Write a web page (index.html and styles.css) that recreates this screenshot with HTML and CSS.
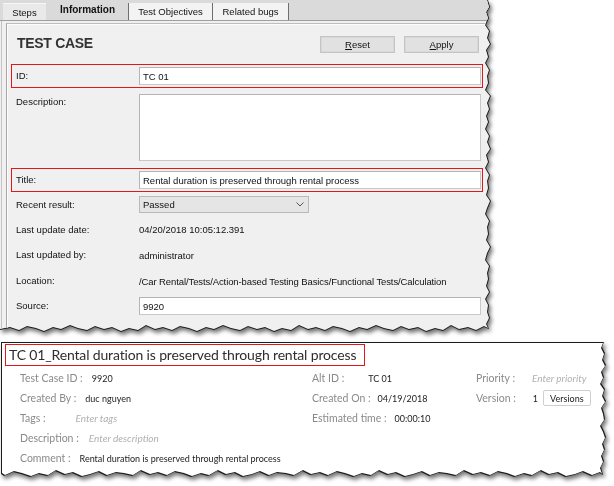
FILE: index.html
```html
<!DOCTYPE html>
<html>
<head>
<meta charset="utf-8">
<title>Test case</title>
<link rel="stylesheet" href="styles.css">
</head>
<body>
<div class="shot shot-top">
  <div class="edge">
    <div class="sheet sheet-top">
      <div class="tabs">
        <div class="tab tab-steps">Steps</div>
        <div class="tab tab-info">Information</div>
        <div class="tab tab-obj">Test Objectives</div>
        <div class="tab tab-bugs">Related bugs</div>
      </div>
      <div class="frame">
        <div class="panel">
          <div class="head">
            <h1>TEST CASE</h1>
            <div class="btns">
              <span class="btn"><u>R</u>eset</span>
              <span class="btn"><u>A</u>pply</span>
            </div>
          </div>
          <div class="row hl r-24"><span class="lbl">ID:</span><span class="field">TC 01</span></div>
          <div class="row r-desc"><span class="lbl">Description:</span><span class="field area"></span></div>
          <div class="row hl r-24 r-title"><span class="lbl">Title:</span><span class="field">Rental duration is preserved through rental process</span></div>
          <div class="row r-25"><span class="lbl">Recent result:</span><span class="select">Passed<svg class="chev" width="8" height="5" viewBox="0 0 8 5"><path d="M0.5 0.5 L4 4 L7.5 0.5" fill="none" stroke="#555" stroke-width="1"/></svg></span></div>
          <div class="row r-25"><span class="lbl">Last update date:</span><span class="val">04/20/2018 10:05:12.391</span></div>
          <div class="row r-26"><span class="lbl">Last updated by:</span><span class="val">administrator</span></div>
          <div class="row r-26"><span class="lbl">Location:</span><span class="val val-loc">/Car Rental/Tests/Action-based Testing Basics/Functional Tests/Calculation</span></div>
          <div class="row r-24"><span class="lbl">Source:</span><span class="field">9920</span></div>
        </div>
      </div>
    </div>
  </div>
</div>

<div class="shot shot-bottom">
  <div class="edge">
    <div class="sheet sheet-bottom">
      <div class="title-box">TC 01_Rental duration is preserved through rental process</div>
      <div class="meta">
        <div class="col">
          <div class="item"><span class="k">Test Case ID :</span><span class="v v-id">9920</span></div>
          <div class="item"><span class="k">Created By :</span><span class="v v-by">duc nguyen</span></div>
          <div class="item"><span class="k">Tags :</span><span class="ph ph-tags">Enter tags</span></div>
          <div class="item"><span class="k">Description :</span><span class="ph ph-desc">Enter description</span></div>
          <div class="item"><span class="k">Comment :</span><span class="v v-com">Rental duration is preserved through rental process</span></div>
        </div>
        <div class="col">
          <div class="item"><span class="k">Alt ID :</span><span class="v v-alt">TC 01</span></div>
          <div class="item"><span class="k">Created On :</span><span class="v v-on">04/19/2018</span></div>
          <div class="item"><span class="k">Estimated time :</span><span class="v v-est">00:00:10</span></div>
        </div>
        <div class="col col-right">
          <div class="item"><span class="k">Priority :</span><span class="ph ph-pri">Enter priority</span></div>
          <div class="item"><span class="k">Version :</span><span class="v v-ver">1</span><span class="vbtn">Versions</span></div>
        </div>
      </div>
    </div>
  </div>
</div>
</body>
</html>
```

FILE: styles.css
```css
* { box-sizing: border-box; margin: 0; padding: 0; }
html, body { background: #fff; }
body {
  width: 614px;
  height: 486px;
  overflow: hidden;
  font-family: "Liberation Sans", Arial, sans-serif;
  color: #111;
}

/* torn screenshot pieces */
.shot { filter: drop-shadow(2px 3px 2px rgba(0,0,0,0.55)); }
.edge { width: 100%; height: 100%; background: #1c1c1c; clip-path: var(--torn); }
.sheet { width: 100%; height: 100%; clip-path: var(--torn); overflow: hidden; }

.shot-top {
  width: 492px;
  height: 333px;
  --torn: polygon(0 0, calc(100% - 4px) 0, calc(100% - 2px) 7px, calc(100% - 5px) 12px, calc(100% - 3px) 18px, calc(100% - 6px) 25px, calc(100% - 2px) 31px, calc(100% - 4px) 38px, calc(100% - 1px) 44px, calc(100% - 5px) 50px, calc(100% - 3px) 57px, calc(100% - 6px) 63px, calc(100% - 2px) 70px, calc(100% - 4px) 76px, calc(100% - 3px) 83px, calc(100% - 6px) 90px, calc(100% - 1px) 96px, calc(100% - 4px) 103px, calc(100% - 2px) 109px, calc(100% - 5px) 116px, calc(100% - 3px) 122px, calc(100% - 6px) 129px, calc(100% - 2px) 136px, calc(100% - 4px) 142px, calc(100% - 1px) 149px, calc(100% - 5px) 155px, calc(100% - 3px) 162px, calc(100% - 6px) 168px, calc(100% - 2px) 175px, calc(100% - 4px) 181px, calc(100% - 3px) 188px, calc(100% - 5px) 195px, calc(100% - 1px) 201px, calc(100% - 4px) 208px, calc(100% - 6px) 214px, calc(100% - 2px) 221px, calc(100% - 4px) 227px, calc(100% - 3px) 234px, calc(100% - 5px) 240px, calc(100% - 1px) 247px, calc(100% - 4px) 253px, calc(100% - 6px) 260px, calc(100% - 2px) 266px, calc(100% - 4px) 273px, calc(100% - 3px) 279px, calc(100% - 5px) 286px, calc(100% - 2px) 292px, calc(100% - 6px) 299px, calc(100% - 3px) 305px, calc(100% - 4px) 312px, calc(100% - 2px) 318px, calc(100% - 5px) 324px, calc(100% - 3px) calc(100% - 4px),
    484px calc(100% - 6px), 476px calc(100% - 2px), 468px calc(100% - 5px), 459px calc(100% - 3px), 451px calc(100% - 7px), 443px calc(100% - 2px), 435px calc(100% - 4px), 426px calc(100% - 1px), 418px calc(100% - 5px), 409px calc(100% - 3px), 401px calc(100% - 6px), 393px calc(100% - 2px), 384px calc(100% - 4px), 376px calc(100% - 7px), 367px calc(100% - 3px), 359px calc(100% - 5px), 350px calc(100% - 1px), 342px calc(100% - 4px), 333px calc(100% - 6px), 325px calc(100% - 2px), 316px calc(100% - 5px), 308px calc(100% - 3px), 299px calc(100% - 7px), 291px calc(100% - 2px), 282px calc(100% - 4px), 274px calc(100% - 1px), 265px calc(100% - 5px), 257px calc(100% - 3px), 248px calc(100% - 6px), 240px calc(100% - 2px), 231px calc(100% - 4px), 223px calc(100% - 7px), 214px calc(100% - 3px), 206px calc(100% - 5px), 197px calc(100% - 1px), 189px calc(100% - 4px), 180px calc(100% - 6px), 172px calc(100% - 2px), 163px calc(100% - 5px), 155px calc(100% - 3px), 146px calc(100% - 7px), 138px calc(100% - 2px), 129px calc(100% - 4px), 121px calc(100% - 1px), 112px calc(100% - 5px), 104px calc(100% - 3px), 95px calc(100% - 6px), 87px calc(100% - 2px), 78px calc(100% - 4px), 70px calc(100% - 7px), 61px calc(100% - 3px), 53px calc(100% - 5px), 44px calc(100% - 1px), 36px calc(100% - 4px), 27px calc(100% - 6px), 19px calc(100% - 2px), 10px calc(100% - 5px), 0 calc(100% - 3px));
}
.shot-top .edge { padding: 0 1px 1px 0; }

.shot-bottom {
  width: 606px;
  height: 136px;
  margin: 9px 0 0 1px;
  --torn: polygon(0 0, calc(100% - 3px) 0, calc(100% - 5px) 5px, calc(100% - 2px) 11px, calc(100% - 4px) 17px, calc(100% - 1px) 23px, calc(100% - 5px) 29px, calc(100% - 3px) 35px, calc(100% - 6px) 41px, calc(100% - 2px) 47px, calc(100% - 4px) 53px, calc(100% - 1px) 59px, calc(100% - 5px) 65px, calc(100% - 3px) 71px, calc(100% - 2px) 77px, calc(100% - 6px) 83px, calc(100% - 3px) 89px, calc(100% - 1px) 95px, calc(100% - 4px) 101px, calc(100% - 2px) 107px, calc(100% - 5px) 113px, calc(100% - 3px) 119px, calc(100% - 6px) 125px, calc(100% - 4px) calc(100% - 3px),
    598px calc(100% - 5px), 590px calc(100% - 2px), 581px calc(100% - 6px), 573px calc(100% - 3px), 564px calc(100% - 1px), 556px calc(100% - 5px), 547px calc(100% - 3px), 539px calc(100% - 7px), 530px calc(100% - 2px), 522px calc(100% - 4px), 513px calc(100% - 1px), 505px calc(100% - 4px), 496px calc(100% - 6px), 488px calc(100% - 2px), 479px calc(100% - 5px), 471px calc(100% - 3px), 462px calc(100% - 7px), 454px calc(100% - 2px), 445px calc(100% - 4px),
    437px calc(100% - 5px), 428px calc(100% - 2px), 420px calc(100% - 6px), 411px calc(100% - 3px), 403px calc(100% - 1px), 394px calc(100% - 5px), 386px calc(100% - 3px), 377px calc(100% - 7px), 369px calc(100% - 2px), 360px calc(100% - 4px), 352px calc(100% - 1px), 343px calc(100% - 4px), 335px calc(100% - 6px), 326px calc(100% - 2px), 318px calc(100% - 5px), 309px calc(100% - 3px), 301px calc(100% - 7px), 292px calc(100% - 2px), 284px calc(100% - 4px),
    275px calc(100% - 5px), 267px calc(100% - 2px), 258px calc(100% - 6px), 250px calc(100% - 3px), 241px calc(100% - 1px), 233px calc(100% - 5px), 224px calc(100% - 3px), 216px calc(100% - 7px), 207px calc(100% - 2px), 199px calc(100% - 4px), 190px calc(100% - 1px), 182px calc(100% - 4px), 173px calc(100% - 6px), 165px calc(100% - 2px), 156px calc(100% - 5px), 148px calc(100% - 3px), 139px calc(100% - 7px), 131px calc(100% - 2px), 122px calc(100% - 4px),
    114px calc(100% - 5px), 105px calc(100% - 2px), 97px calc(100% - 6px), 88px calc(100% - 3px), 80px calc(100% - 1px), 71px calc(100% - 5px), 63px calc(100% - 3px), 54px calc(100% - 7px), 46px calc(100% - 2px), 37px calc(100% - 4px), 29px calc(100% - 1px), 20px calc(100% - 4px), 12px calc(100% - 6px), 3px calc(100% - 2px), 0 calc(100% - 4px));
}
.shot-bottom .edge { padding: 1px; }

/* ---------- top: desktop form ---------- */
.sheet-top { background: #f0f0f0; font-size: 9.5px; }

.tabs {
  display: flex;
  align-items: flex-end;
  height: 21px;
  padding-left: 3px;
  background: #dadada;
  border-bottom: 1px solid #9f9f9f;
}
.tab {
  height: 17px;
  display: flex;
  align-items: center;
  justify-content: center;
  background: #f3f3f3;
  border-left: 1px solid #6f6f6f;
  border-right: 1px solid #6f6f6f;
}
.tab-steps { width: 43px; background: #e9e9e9; border: none; border-top: 1px solid #f6f6f6; margin-right: 1px; }
.tab-info { width: 81px; height: 20px; background: #dadada; border: none; font-weight: bold; font-size: 10px; padding-bottom: 2px; }
.tab-obj { width: 85px; }
.tab-bugs { width: 76px; border-left: none; }

.frame {
  height: calc(100% - 21px);
  margin-left: 1px;
  padding: 2px 0 0 4px;
  border-left: 1px solid #c4c4c4;
}
.panel {
  height: 100%;
  border-top: 1px solid #bdbdbd;
  border-left: 1px solid #a6a6a6;
  box-shadow: inset 1px 1px 0 #fdfdfd;
}

.head {
  width: 472px;
  height: 40px;
  margin-left: 4px;
  padding: 0 4px 0 6px;
  display: flex;
  align-items: center;
  justify-content: space-between;
}
.head h1 {
  font-size: 14px;
  font-weight: bold;
  letter-spacing: -0.3px;
  color: #333;
  margin-bottom: 3px;
}
.btns { display: flex; gap: 9px; }
.btn {
  width: 75px;
  height: 17px;
  display: flex;
  align-items: center;
  justify-content: center;
  background: #e1e1e1;
  border: 1px solid #c4c4c4;
  box-shadow: inset 0 0 0 1px #d8d8d8;
}

.row {
  width: 472px;
  margin-left: 4px;
  display: flex;
  align-items: center;
  border: 1px solid transparent;
  padding: 0 1px 0 4px;
}
.row.hl { border-color: #e3161b; }
.r-24 { height: 24px; }
.r-25 { height: 25px; }
.r-26 { height: 26px; }
.r-desc { height: 74px; margin-top: 3px; align-items: flex-start; padding-top: 2px; }
.r-title { margin-top: 3px; }
.lbl { width: 123px; flex: none; line-height: 16px; }
.field {
  width: 342px;
  height: 18px;
  display: flex;
  align-items: center;
  padding-left: 3px;
  background: #fff;
  border: 1px solid #c8c8c8;
  border-top-color: #b4b4b4;
  border-left-color: #b4b4b4;
}
.field.area { height: 67px; }
.select {
  width: 170px;
  height: 17px;
  display: flex;
  align-items: center;
  justify-content: space-between;
  padding: 0 4px 0 3px;
  background: #e5e5e5;
  border: 1px solid #b9b9b9;
}
.chev { display: block; }
.val { white-space: nowrap; }
.val-loc { letter-spacing: -0.1px; }

/* ---------- bottom: web view ---------- */
.sheet-bottom { background: #fff; font-family: Lato, "Liberation Sans", sans-serif; }
.title-box {
  display: inline-block;
  height: 22px;
  margin: 1px 0 0 3px;
  padding: 0 8px 0 3px;
  border: 1px solid #e3161b;
  font-size: 14px;
  letter-spacing: -0.15px;
  line-height: 20px;
  color: #2e2e2e;
  white-space: nowrap;
}
.meta {
  display: grid;
  grid-template-columns: 292px 164px 1fr;
  padding-left: 18px;
  margin-top: 2px;
}
.col { display: flex; flex-direction: column; }
.item { height: 20px; display: flex; align-items: center; white-space: nowrap; }
.k { font-size: 10.5px; color: #8a8a8a; }
.v { font-size: 9px; color: #222; margin-left: 9px; }
.ph { font-size: 10px; font-style: italic; color: #b0b0b0; }
.ph-tags { margin-left: 30px; }
.ph-desc { margin-left: 10px; }
.ph-pri { margin-left: 17px; }
.v-alt { margin-left: 24px; }
.v-on { margin-left: 7px; }
.v-est { margin-left: 8px; }
.v-ver { margin-left: 17px; }
.vbtn {
  height: 16px;
  margin-left: 5px;
  padding: 0 6px;
  display: flex;
  align-items: center;
  border: 1px solid #cfcfcf;
  border-radius: 2px;
  font-size: 9px;
  color: #222;
}
```
